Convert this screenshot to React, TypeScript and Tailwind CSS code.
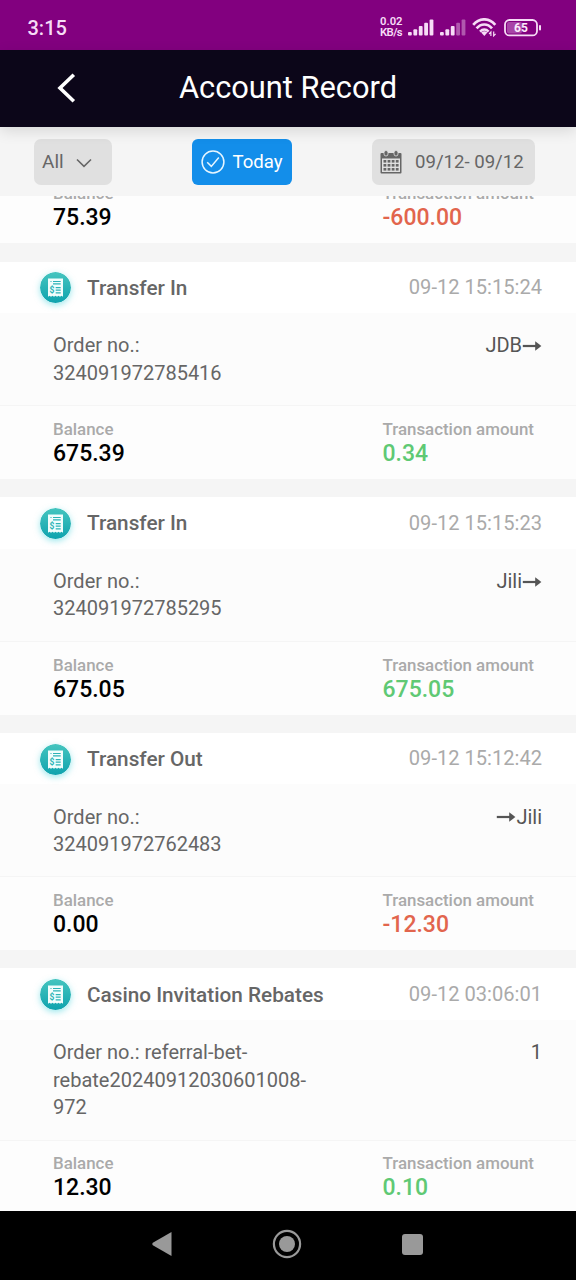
import React from "react";

type RecordItem = {
  title: string;
  time: string;
  order: string[];
  detail?: string;
  arrow?: "before" | "after";
  balance: string;
  amount: string;
};

const records: RecordItem[] = [
  {
    title: "Transfer In",
    time: "09-12 15:15:24",
    order: ["Order no.:", "324091972785416"],
    detail: "JDB",
    arrow: "after",
    balance: "675.39",
    amount: "0.34",
  },
  {
    title: "Transfer In",
    time: "09-12 15:15:23",
    order: ["Order no.:", "324091972785295"],
    detail: "Jili",
    arrow: "after",
    balance: "675.05",
    amount: "675.05",
  },
  {
    title: "Transfer Out",
    time: "09-12 15:12:42",
    order: ["Order no.:", "324091972762483"],
    detail: "Jili",
    arrow: "before",
    balance: "0.00",
    amount: "-12.30",
  },
  {
    title: "Casino Invitation Rebates",
    time: "09-12 03:06:01",
    order: ["Order no.: referral-bet-", "rebate20240912030601008-", "972"],
    detail: "1",
    balance: "12.30",
    amount: "0.10",
  },
];

function Signal({ weak }: { weak?: boolean }) {
  return (
    <svg width="26" height="17" viewBox="0 0 26 17" fill="#f6dcf6">
      <rect x="0" y="13" width="3.8" height="3.6" rx="1" />
      <rect x="5.4" y="10.3" width="3.8" height="6.3" rx="1" />
      <rect x="10.8" y="7" width="3.8" height="9.6" rx="1" />
      <rect x="16.2" y="3.8" width="3.8" height="12.8" rx="1" opacity={weak ? 0.4 : 1} />
      <rect x="21.6" y="0.6" width="3.8" height="16" rx="1" opacity={weak ? 0.4 : 1} />
    </svg>
  );
}

function StatusBar() {
  return (
    <div className="flex h-[50px] shrink-0 items-center bg-[#82007f] pt-[5px] pr-[34px] pl-[27.5px] text-[#f6dcf6]">
      <span className="pt-px text-[20px] leading-6 font-medium">3:15</span>
      <div className="ml-auto flex items-center">
        <div className="mr-[5px] w-[23px] text-[11.3px] leading-[10.5px] font-semibold whitespace-nowrap">
          <div>0.02</div>
          <div className="tracking-[-0.6px]">KB/s</div>
        </div>
        <Signal />
        <div className="w-[6px]" />
        <Signal weak />
        <svg className="ml-[6px]" width="25" height="19" viewBox="0 0 25 19" fill="none" stroke="#f6dcf6">
          <path d="M1.2 6.8 C7.5 -0.5 17 -0.5 23.3 6.8" strokeWidth="2.7" />
          <path d="M4.6 10.3 C9 5.2 15.6 5.2 20 10.3" strokeWidth="2.7" />
          <path d="M8 13.6 C10.6 10.9 14 10.9 16.6 13.6" strokeWidth="2.5" />
          <path d="M9.2 14.4 Q12.3 12 15.4 14.4 L12.3 18 Z" fill="#f6dcf6" stroke="none" />
          <path d="M18.9 18 v-4 l-1.8 2 M21.7 13.4 v4.4 l1.9 -2" strokeWidth="1.2" />
        </svg>
        <svg className="ml-[7px]" width="38" height="18" viewBox="0 0 38 18">
          <rect x="3" y="3" width="15" height="11.4" rx="2" fill="#a844a7" />
          <rect x="1" y="1" width="32" height="15.4" rx="4.5" fill="none" stroke="#f6dcf6" strokeWidth="1.8" />
          <rect x="35" y="6" width="2" height="5.5" rx="1" fill="#f6dcf6" />
          <text x="17" y="13" textAnchor="middle" fontSize="12" fontWeight="700" fill="#fbeafb">
            65
          </text>
        </svg>
      </div>
    </div>
  );
}

function Header() {
  return (
    <header className="relative z-20 flex h-[77px] shrink-0 items-center justify-center bg-[#0c0619] text-white shadow-[0_4px_14px_rgba(0,0,0,0.12)]">
      <svg className="absolute top-[23px] left-[56px]" width="20" height="30" viewBox="0 0 20 30" fill="none" stroke="#fff" strokeWidth="3.6">
        <path d="M17.8 1.8 L4 15 L17.8 28.2" />
      </svg>
      <h1 className="pb-[2px] text-[30.8px] leading-9">Account Record</h1>
    </header>
  );
}

function Filters() {
  return (
    <div className="z-10 flex h-[69px] shrink-0 items-center justify-between bg-[#f5f5f5] pr-[41px] pl-[34px] text-[18.6px] text-[#666]">
      <div className="flex h-[46px] w-[78px] items-center rounded-[7px] bg-[#e0e0e0] pl-2">
        <span className="pt-px text-[19px]">All</span>
        <svg className="mt-[2px] ml-[12px]" width="16" height="10" viewBox="0 0 16 10" fill="none" stroke="#666" strokeWidth="1.6">
          <path d="M1 1.5 L8 8.3 L15 1.5" />
        </svg>
      </div>
      <div className="-ml-px flex h-[46px] w-[100px] items-center rounded-[6px] bg-[#138eea] pl-[9px] text-white">
        <svg width="24" height="24" viewBox="0 0 24 24" fill="none" stroke="#e6f6ff" strokeWidth="1.5">
          <circle cx="12" cy="12" r="10.9" />
          <path d="M6.2 12.3 L10.3 16.4 L17.8 7.6" />
        </svg>
        <span className="ml-2 pt-[2px]">Today</span>
      </div>
      <div className="flex h-[46px] w-[163px] items-center rounded-[7px] bg-[#e0e0e0] pl-[8px]">
        <CalendarIcon />
        <span className="ml-[13px] pt-[2px] whitespace-nowrap">09/12- 09/12</span>
      </div>
    </div>
  );
}

function CalendarIcon() {
  return (
    <svg width="22" height="24" viewBox="0 0 22 24" fill="#666">
      <path d="M1.5 3 h19 q1 0 1 1 v18.5 q0 1 -1 1 h-19 q-1 0 -1 -1 V4 q0 -1 1 -1z" />
      <rect x="2" y="8.5" width="18" height="13.5" fill="#e0e0e0" />
      <rect x="4" y="0.5" width="4" height="5.5" rx="2" stroke="#e0e0e0" strokeWidth="0.8" />
      <rect x="14" y="0.5" width="4" height="5.5" rx="2" stroke="#e0e0e0" strokeWidth="0.8" />
      {[10, 14, 18].map((y) =>
        [3.5, 7.6, 11.7, 15.8].map((x) => <rect key={`${x}-${y}`} x={x} y={y} width="2.8" height="2.6" />)
      )}
    </svg>
  );
}

function ReceiptIcon() {
  return (
    <svg className="rounded-full shadow-[0_2px_6px_rgba(60,210,220,0.5)]" width="31" height="31" viewBox="0 0 31 31">
      <defs>
        <linearGradient id="teal" x1="0" y1="0" x2="0" y2="1">
          <stop offset="0" stopColor="#45c5bf" />
          <stop offset="1" stopColor="#0fa3ae" />
        </linearGradient>
      </defs>
      <circle cx="15.5" cy="15.5" r="15.5" fill="url(#teal)" />
      <path d="M8 6.5 H23 V24.8 l-1.5 -1 l-1.5 1 l-1.5 -1 l-1.5 1 l-1.5 -1 l-1.5 1 l-1.5 -1 l-1.5 1 l-1.5 -1 L8 24.8 z" fill="#f2fdfc" />
      <path d="M13 9.5 h7.7 M13 11.9 h7.7 M15.7 15.6 h5 M15.7 18.2 h5 M15.7 20.8 h5" stroke="#2cb3b6" strokeWidth="1.2" />
      <path d="M10.5 9.5 h1" stroke="#2cb3b6" strokeWidth="1.2" />
      <text x="12" y="21" textAnchor="middle" fontSize="8.5" fontWeight="700" fill="#2cb3b6">
        $
      </text>
    </svg>
  );
}

function Arrow() {
  return (
    <svg width="20" height="10" viewBox="0 0 20 10" fill="#555">
      <rect x="0.8" y="3.9" width="14" height="2.2" />
      <path d="M13.2 0.2 L19.4 5 L13.2 9.8 z" />
    </svg>
  );
}

function Totals({ balance, amount }: { balance: string; amount: string }) {
  const color = amount.startsWith("-") ? "text-[#e2654d]" : "text-[#5fc974]";
  return (
    <div className="flex h-[73px] bg-[#fdfdfd] pt-[10.8px] pl-[53px] font-medium">
      <div className="w-[329.5px]">
        <div className="text-[16.9px] leading-6 text-[#aaa]">Balance</div>
        <div className="text-[23px] leading-[25px] text-black">{balance}</div>
      </div>
      <div>
        <div className="text-[16.9px] leading-6 text-[#aaa]">Transaction amount</div>
        <div className={`text-[23px] leading-[25px] ${color}`}>{amount}</div>
      </div>
    </div>
  );
}

function RecordCard({ item }: { item: RecordItem }) {
  return (
    <section className="mb-[18.1px] bg-[#fcfcfc] text-[#666]">
      <div className="flex h-[51.4px] items-center bg-white pt-px pr-[34px] pl-10">
        <ReceiptIcon />
        <h2 className="ml-4 pt-px text-[20.75px] font-medium">{item.title}</h2>
        <span className="ml-auto pb-px text-[20.1px] text-[#aaa]">{item.time}</span>
      </div>
      <div className="flex justify-between border-b border-[#f5f5f5] pt-[19.3px] pr-[34px] pb-[17.7px] pl-[53px] text-[20px] leading-[27.6px]">
        <div>
          {item.order.map((line) => (
            <div key={line}>{line}</div>
          ))}
        </div>
        <div className="flex h-[27.6px] items-center text-[#555]">
          {item.arrow === "before" && <Arrow />}
          <span>{item.detail}</span>
          {item.arrow === "after" && <Arrow />}
        </div>
      </div>
      <Totals balance={item.balance} amount={item.amount} />
    </section>
  );
}

function NavBar() {
  return (
    <nav className="z-10 flex h-[69px] shrink-0 items-center bg-black pb-[3px] pl-[151px]">
      <svg width="22" height="28" viewBox="0 0 22 28" fill="#999">
        <path d="M20.5 2 V26 L1.8 15.2 Q0.6 14 1.8 12.8 z" />
      </svg>
      <svg className="ml-[99px]" width="30" height="30" viewBox="0 0 30 30">
        <circle cx="15" cy="15" r="13.1" fill="none" stroke="#999" strokeWidth="2.2" />
        <circle cx="15" cy="15" r="8" fill="#999" />
      </svg>
      <div className="ml-[100px] h-[21px] w-[21px] rounded-[3px] bg-[#999]" />
    </nav>
  );
}

export default function App() {
  return (
    <div className="flex h-[1280px] w-[576px] flex-col overflow-hidden bg-[#f5f5f5] font-[Roboto,sans-serif]">
      <StatusBar />
      <Header />
      <Filters />
      {/* list is scrolled, so the first record only shows its totals */}
      <main className="min-h-0 flex-1 overflow-hidden">
        <div className="-mt-[26px] mb-[18.5px]">
          <Totals balance="75.39" amount="-600.00" />
        </div>
        {records.map((item) => (
          <RecordCard key={item.time} item={item} />
        ))}
      </main>
      <NavBar />
    </div>
  );
}
